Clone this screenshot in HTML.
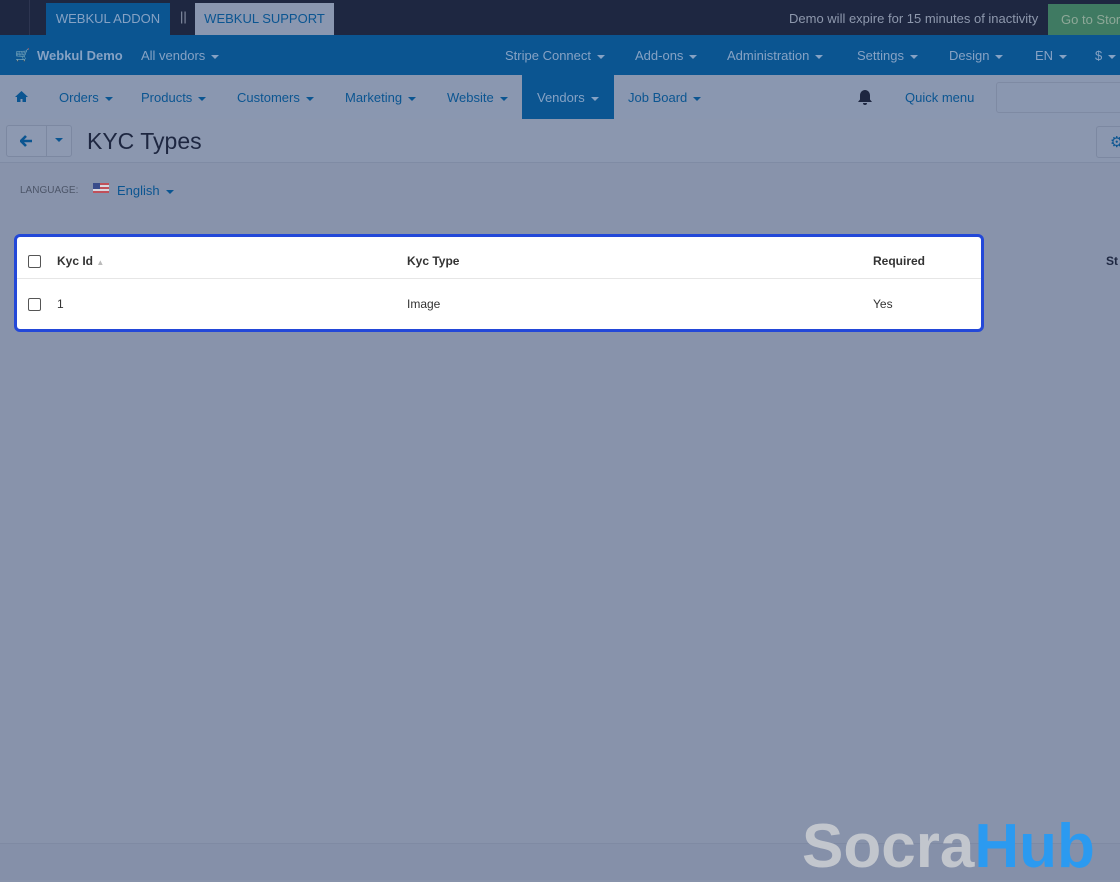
<!DOCTYPE html>
<html><head><meta charset="utf-8"><style>
*{box-sizing:border-box;margin:0;padding:0}
body{width:1120px;height:880px;overflow:hidden;background:#8893ab;font-family:"Liberation Sans",sans-serif;position:relative}
.a{position:absolute}
.top{left:0;top:0;width:1120px;height:35px;background:#1e2741}
.nav1{left:0;top:35px;width:1120px;height:40px;background:#0b5591;color:#86a2c4;font-size:13px}
.nav2{left:0;top:75px;width:1120px;height:44px;background:#8a97b0;color:#0b5591;font-size:13px}
.tb{left:0;top:119px;width:1120px;height:44px;background:#8b97af;border-bottom:1px solid #7f8ba4}
.car{display:inline-block;width:0;height:0;border-left:4px solid transparent;border-right:4px solid transparent;border-top:4px solid currentColor;vertical-align:middle;margin-left:6px}
</style></head><body>
<div class="a top"></div>
<div class="a" style="left:16px;top:0;width:14px;height:35px;border-right:1px solid #2d3550"></div>
<div class="a" style="left:46px;top:3px;width:124px;height:32px;background:#0b5591;color:#86a2c4;font-size:13px;line-height:32px;text-align:center">WEBKUL ADDON</div>
<div class="a" style="left:180px;top:9px;color:#8a93a8;font-size:13px">||</div>
<div class="a" style="left:195px;top:3px;width:139px;height:32px;background:#8a97b0;color:#0b5591;font-size:13px;line-height:32px;text-align:center">WEBKUL SUPPORT</div>
<div class="a" style="left:789px;top:11px;color:#8e98ad;font-size:13px">Demo will expire for 15 minutes of inactivity</div>
<div class="a" style="left:1048px;top:4px;width:80px;height:31px;background:#3f7a62;color:#8ea898;font-size:13px;line-height:31px;padding-left:13px;white-space:nowrap">Go to Store</div>
<div class="a nav1">
<span class="a" style="left:15px;top:13px;font-size:12px">🛒</span>
<span class="a" style="left:37px;top:13px;font-weight:bold">Webkul Demo</span>
<span class="a" style="left:141px;top:13px">All vendors<span class="car"></span></span>
<span class="a" style="left:505px;top:13px">Stripe Connect<span class="car"></span></span>
<span class="a" style="left:635px;top:13px">Add-ons<span class="car"></span></span>
<span class="a" style="left:727px;top:13px">Administration<span class="car"></span></span>
<span class="a" style="left:857px;top:13px">Settings<span class="car"></span></span>
<span class="a" style="left:949px;top:13px">Design<span class="car"></span></span>
<span class="a" style="left:1035px;top:13px">EN<span class="car"></span></span>
<span class="a" style="left:1095px;top:13px">$<span class="car"></span></span>
</div>
<div class="a nav2">
<svg class="a" style="left:15px;top:16px" width="13" height="11" viewBox="0 0 13 11"><path d="M6.5 0L0 6h2v5h3.5V8h2v3H11V6h2z" fill="#0b5591"/></svg>
<span class="a" style="left:59px;top:15px">Orders<span class="car"></span></span>
<span class="a" style="left:141px;top:15px">Products<span class="car"></span></span>
<span class="a" style="left:237px;top:15px">Customers<span class="car"></span></span>
<span class="a" style="left:345px;top:15px">Marketing<span class="car"></span></span>
<span class="a" style="left:447px;top:15px">Website<span class="car"></span></span>
<div class="a" style="left:522px;top:0;width:92px;height:44px;background:#0b5591;color:#86a2c4;padding:15px 0 0 15px">Vendors<span class="car"></span></div>
<span class="a" style="left:628px;top:15px">Job Board<span class="car"></span></span>
<svg class="a" style="left:856px;top:14px" width="18" height="18" viewBox="0 0 18 18"><path d="M9 1c-3 0-5 2.5-5 5.5v4L2 13h14l-2-2.5v-4C14 3.5 12 1 9 1zM7 14a2 2 0 004 0z" fill="#1e2741"/></svg>
<span class="a" style="left:905px;top:15px">Quick menu</span>
<div class="a" style="left:996px;top:7px;width:130px;height:31px;border:1px solid #7e8aa3;border-radius:3px"></div>
</div>
<div class="a tb"></div>
<div class="a" style="left:6px;top:125px;width:66px;height:32px;border:1px solid #7c88a1;border-radius:3px;background:#8d99b1"></div>
<div class="a" style="left:46px;top:126px;width:1px;height:30px;background:#7c88a1"></div>
<svg class="a" style="left:20px;top:135px" width="13" height="12" viewBox="0 0 13 12"><path d="M6 1L1 6l5 5M1.5 6H12" stroke="#0b5591" stroke-width="2.6" fill="none"/></svg>
<span class="a" style="left:55px;top:135px;color:#0b5591;font-size:10px"><span class="car" style="margin:0"></span></span>
<div class="a" style="left:87px;top:128px;font-size:23px;color:#1e2741">KYC Types</div>
<div class="a" style="left:1096px;top:126px;width:40px;height:32px;border:1px solid #7c88a1;border-radius:3px;color:#0b5591;font-size:15px;padding:6px 0 0 13px">⚙</div>
<div class="a" style="left:20px;top:185px;font-size:10px;color:#4c5568">LANGUAGE:</div>
<div class="a" style="left:93px;top:183px;width:16px;height:10px;background:linear-gradient(#c0505a 0 20%,#d8d8e0 20% 40%,#c0505a 40% 60%,#d8d8e0 60% 80%,#c0505a 80%)"><div style="width:7px;height:6px;background:#3a4c8a"></div></div>
<div class="a" style="left:117px;top:183px;font-size:13px;color:#0b5591">English<span class="car"></span></div>
<div class="a" style="left:1106px;top:254px;font-size:12px;font-weight:bold;color:#1e2741">St</div>
<div class="a" style="left:14px;top:234px;width:970px;height:98px;background:#fff;border:3px solid #2348d8;border-radius:6px"></div>
<div class="a" style="left:17px;top:278px;width:964px;height:1px;background:#e6e6e6"></div>
<div class="a" style="left:28px;top:255px;width:13px;height:13px;border:1px solid #555;border-radius:2px"></div>
<div class="a" style="left:28px;top:298px;width:13px;height:13px;border:1px solid #555;border-radius:2px"></div>
<div class="a" style="left:57px;top:254px;font-size:12px;font-weight:bold;color:#333">Kyc Id <span style="color:#bbb;font-size:8px">▲</span></div>
<div class="a" style="left:407px;top:254px;font-size:12px;font-weight:bold;color:#333">Kyc Type</div>
<div class="a" style="left:873px;top:254px;font-size:12px;font-weight:bold;color:#333">Required</div>
<div class="a" style="left:57px;top:297px;font-size:12px;color:#333">1</div>
<div class="a" style="left:407px;top:297px;font-size:12px;color:#333">Image</div>
<div class="a" style="left:873px;top:297px;font-size:12px;color:#333">Yes</div>
<div class="a" style="left:0;top:843px;width:1120px;height:37px;background:#8590a9;border-top:1px solid #7f8aa3"></div>
<div class="a" style="left:802px;top:812px;font-size:62px;font-weight:bold;line-height:70px;white-space:nowrap"><span style="color:#c2c6cd">Socra</span><span style="color:#2b9af0">Hub</span></div>
</body></html>
